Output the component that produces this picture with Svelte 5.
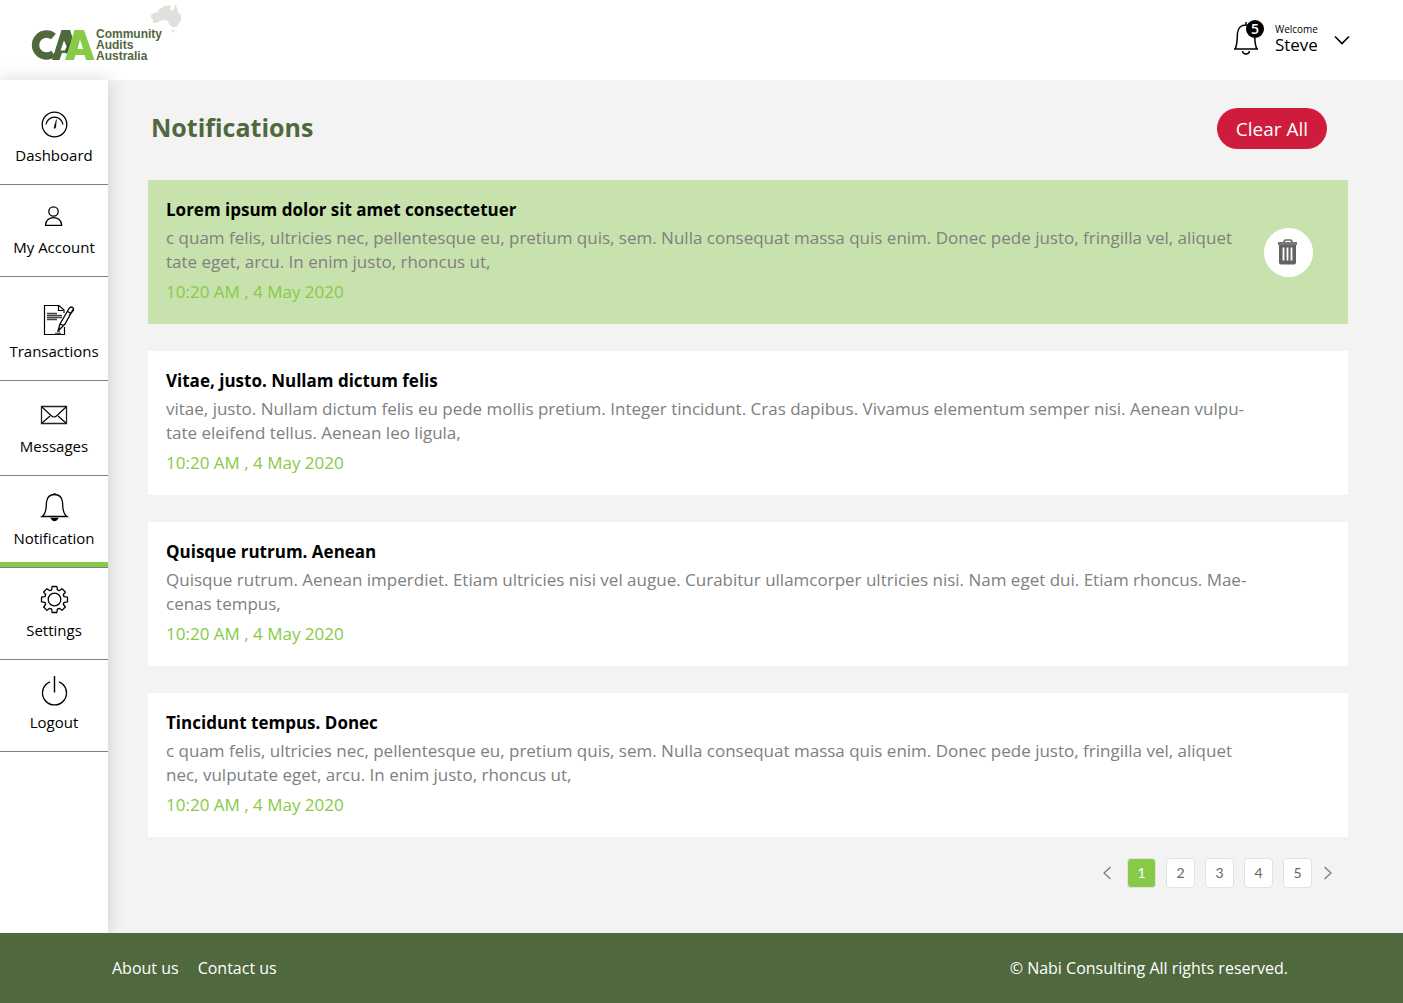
<script>
  const navItems = [
    { id: 'dashboard', label: 'Dashboard' },
    { id: 'account', label: 'My Account' },
    { id: 'transactions', label: 'Transactions' },
    { id: 'messages', label: 'Messages' },
    { id: 'notification', label: 'Notification' },
    { id: 'settings', label: 'Settings' },
    { id: 'logout', label: 'Logout' }
  ];

  const notifications = [
    {
      title: 'Lorem ipsum dolor sit amet consectetuer',
      body: 'c quam felis, ultricies nec, pellentesque eu, pretium quis, sem. Nulla consequat massa quis enim. Donec pede justo, fringilla vel, aliquet\ntate eget, arcu. In enim justo, rhoncus ut,',
      time: '10:20 AM , 4 May 2020',
      selected: true
    },
    {
      title: 'Vitae, justo. Nullam dictum felis',
      body: 'vitae, justo. Nullam dictum felis eu pede mollis pretium. Integer tincidunt. Cras dapibus. Vivamus elementum semper nisi. Aenean vulpu-\ntate eleifend tellus. Aenean leo ligula,',
      time: '10:20 AM , 4 May 2020',
      selected: false
    },
    {
      title: 'Quisque rutrum. Aenean',
      body: 'Quisque rutrum. Aenean imperdiet. Etiam ultricies nisi vel augue. Curabitur ullamcorper ultricies nisi. Nam eget dui. Etiam rhoncus. Mae-\ncenas tempus,',
      time: '10:20 AM , 4 May 2020',
      selected: false
    },
    {
      title: 'Tincidunt tempus. Donec',
      body: 'c quam felis, ultricies nec, pellentesque eu, pretium quis, sem. Nulla consequat massa quis enim. Donec pede justo, fringilla vel, aliquet\nnec, vulputate eget, arcu. In enim justo, rhoncus ut,',
      time: '10:20 AM , 4 May 2020',
      selected: false
    }
  ];

  const pages = [1, 2, 3, 4, 5];
  let current = $state(1);

  // Outline of the settings cog: eight teeth round a 16,16 centre.
  const cog = (() => {
    const pts = [];
    for (let i = 0; i < 8; i++) {
      const a = (i * Math.PI) / 4;
      for (const [da, r] of [[-0.29, 10], [-0.18, 13.2], [0.18, 13.2], [0.29, 10]]) {
        pts.push(`${(16.5 + r * Math.sin(a + da)).toFixed(2)} ${(16.5 - r * Math.cos(a + da)).toFixed(2)}`);
      }
    }
    return 'M' + pts.join('L') + 'Z';
  })();
</script>

<div class="page">
  <header class="topbar">
    <a class="logo" href="#home" aria-label="Community Audits Australia">
      <svg class="mark" width="64" height="32" viewBox="0 0 64 32" aria-hidden="true">
        <path d="M21.500 7.500A11 11 0 1 0 21.500 24.500" fill="none" stroke="#50683d" stroke-width="7.400" />
        <path d="M20 31L29.500 1H38L44 19L38 31L34.500 24H30L27.500 31Z" fill="#50683d" />
        <path d="M32 11.500L28.500 21.500H33.500L35 18.500Z" fill="#fff" />
        <path d="M38 12L42 19L36 27L33 21Z" fill="#3f5430" />
        <path fill-rule="evenodd" d="M33 31L42.500 1H52L62.500 31H54L52.500 26H43.500L42 31ZM45.500 20H51L48 10.500Z" fill="#86ca47" />
      </svg>
      <span class="wordmark">Community<br />Audits<br />Australia</span>
      <svg class="map" width="32" height="30" viewBox="0 0 32 30" aria-hidden="true">
        <path fill="#dfe1dc" d="M1 11L4 9L8 8L9 5L12 4L14 2L17 2L18 1L21 2L20 5L23 7L24 5L25 0L27 4L28 8L31 11L31 16L28 21L26 23L22 23L19 20L18 17L14 16L10 17L7 19L3 19L3 16L1 13ZM21 26L25 26L23 29Z" />
      </svg>
    </a>
    <div class="user">
      <button class="bell" aria-label="Notifications, 5 unread">
        <svg width="26" height="34" viewBox="0 0 26 34" fill="none" stroke="#000" stroke-width="1.500" aria-hidden="true">
          <path d="M13 1V4M1 28H25M2 28C4.500 24 4 18 4.500 12C5 7 8.500 4 13 4S21 7 21.500 12C22 18 21.500 24 24 28M9.500 30C10 34 16 34 16.500 30" />
        </svg>
        <span class="badge">5</span>
      </button>
      <button class="who" aria-label="Account menu">
        <span class="names"><small>Welcome</small><span>Steve</span></span>
        <svg width="16" height="10" viewBox="0 0 16 10" fill="none" stroke="#000" stroke-width="1.600" aria-hidden="true">
          <path d="M1 1.500L8 8.500L15 1.500" />
        </svg>
      </button>
    </div>
  </header>

  <div class="middle">
    <nav class="sidebar" aria-label="Main">
      {#each navItems as item (item.id)}
        <a class="item {item.id}" class:active={item.id === 'notification'} href="#{item.id}">
          <svg width="32" height="32" viewBox="0 0 32 32" fill="none" stroke="#000" stroke-width="1.300" aria-hidden="true">
            {#if item.id === 'dashboard'}
              <circle cx="16.500" cy="16.500" r="12.300" />
              <path d="M8 16.500A8.600 8.600 0 0 1 25 16.500" />
              <path d="M18.500 11.500L17.800 19Q17 21.500 16 20Q16 18.500 18.500 11.500Z" fill="#000" stroke-width=".4" />
            {:else if item.id === 'account'}
              <circle cx="15.500" cy="11.500" r="4.700" />
              <path d="M7.500 25.400C7.500 15 23.700 15 23.700 25.400Z" />
            {:else if item.id === 'transactions'}
              <path d="M26.500 23V30.500H6.500V1.500H21L26 6V9M20.500 1.500V6.500H25" stroke-width="1.200" />
              <path d="M9 9.500H19M9 11.500H24M9 13.500H24M9 15.500H19" stroke="#444" />
              <path d="M20 27L22 20L31 4.500Q33.500 1.500 35.500 4.500L27 20L20.500 26.500M29 7L33 9.500M31.500 11L36 5.500M22 20L26 21.500" stroke-width="1.300" />
              <path d="M17 29.500H23M19 27.500H22" stroke="#555" />
            {:else if item.id === 'messages'}
              <path d="M3.500 7.500H28.500V24.500H3.500Z" stroke="#222" />
              <path d="M4 8L13 16.500Q16 19.500 19 16.500L28 8M4 24L12 17M28 24L20 17" stroke-width="1.100" />
            {:else if item.id === 'notification'}
              <path d="M4 25.500H29C24 22 25 16 24.500 11C23.800 5.500 20.500 3.500 16.500 3.500S9.200 5.500 8.500 11C8 16 9 22 4 25.500Z" />
              <path d="M13.500 27.500H19.500Q16.500 31.500 13.500 27.500ZM15.500 3H17.500" fill="#000" />
            {:else if item.id === 'settings'}
              <path d={cog} stroke-linejoin="round" />
              <circle cx="16.500" cy="16.500" r="6.300" />
            {:else}
              <path d="M12 6.800A12 12 0 1 0 21 6.800M16.500 1V17.500" stroke-width="1.400" />
            {/if}
          </svg>
          <span>{item.label}</span>
        </a>
      {/each}
    </nav>

    <main>
      <div class="heading">
        <h1>Notifications</h1>
        <button class="clear">Clear All</button>
      </div>

      <div class="list">
        {#each notifications as n (n.title)}
          <article class="card" class:selected={n.selected}>
            <div class="text">
              <h2>{n.title}</h2>
              <p>{n.body}</p>
              <time datetime="2020-05-04T10:20">{n.time}</time>
            </div>
            {#if n.selected}
              <button class="trash" aria-label="Delete notification">
                <svg width="21" height="26" viewBox="0 0 21 26" aria-hidden="true">
                  <path d="M6 3Q6 1 8 1H12Q14 1 14 3" fill="none" stroke="#666" stroke-width="1.500" />
                  <path d="M0 3H19V6H0Z" fill="#777" />
                  <path d="M1 6H18V23.500Q18 25.500 16 25.500H3Q1 25.500 1 23.500Z" fill="#636363" />
                  <path d="M5.500 8.500V21.500M9.500 8.500V21.500M13.500 8.500V21.500" stroke="#fff" stroke-width="1.800" />
                </svg>
              </button>
            {/if}
          </article>
        {/each}
      </div>

      <nav class="pager" aria-label="Pages">
        <button class="arrow prev" aria-label="Previous page" onclick={() => (current = Math.max(1, current - 1))}>
          <svg width="8" height="14" viewBox="0 0 8 14" fill="none" stroke="#777" stroke-width="1.200" aria-hidden="true"><path d="M7.500 1L1 7L7.500 13" /></svg>
        </button>
        {#each pages as p (p)}
          <button class="num" class:on={p === current} onclick={() => (current = p)}>{p}</button>
        {/each}
        <button class="arrow" aria-label="Next page" onclick={() => (current = Math.min(5, current + 1))}>
          <svg width="8" height="14" viewBox="0 0 8 14" fill="none" stroke="#777" stroke-width="1.200" aria-hidden="true"><path d="M.5 1L7 7L.5 13" /></svg>
        </button>
      </nav>
    </main>
  </div>

  <footer>
    <div class="links">
      <a href="#about">About us</a>
      <a href="#contact">Contact us</a>
    </div>
    <span>© Nabi Consulting All rights reserved.</span>
  </footer>
</div>

<style>
  :global(body) {
    margin: 0;
  }
  .page {
    display: flex;
    flex-direction: column;
    min-height: 100vh;
    font-family: 'Open Sans', 'Noto Sans', sans-serif;
    font-size: 17px;
    line-height: 24px;
    color: #000;
    background: #f3f3f3;
  }
  .page :global(*) {
    box-sizing: border-box;
  }
  a {
    color: inherit;
    text-decoration: none;
  }
  button {
    font: inherit;
    color: inherit;
    background: none;
    border: 0;
    padding: 0;
    cursor: pointer;
  }
  svg {
    display: block;
    flex: none;
    overflow: visible;
  }

  .topbar {
    display: flex;
    justify-content: space-between;
    align-items: center;
    height: 80px;
    padding: 0 53px 0 32px;
    background: #fff;
  }
  .logo {
    position: relative;
    display: flex;
    align-items: center;
    padding-top: 10px;
  }
  .wordmark {
    font: bold 12px/11px 'Liberation Sans', sans-serif;
    color: #50683d;
  }
  .map {
    position: absolute;
    top: -15px;
    left: 118px;
  }
  .user {
    display: flex;
    align-items: center;
    gap: 16px;
  }
  .bell {
    position: relative;
    padding-bottom: 4px;
  }
  .badge {
    position: absolute;
    top: -1px;
    left: 13px;
    width: 18px;
    height: 18px;
    border-radius: 50%;
    background: #000;
    color: #fff;
    font-size: 14px;
    font-weight: 600;
    line-height: 18px;
  }
  .who {
    display: flex;
    align-items: center;
    gap: 16px;
    text-align: left;
    line-height: 18px;
  }
  .names {
    display: flex;
    flex-direction: column;
    padding-bottom: 4px;
  }
  .names small {
    font-size: 10px;
    line-height: 14px;
  }

  .middle {
    display: flex;
    flex: 1;
  }
  .sidebar {
    flex: none;
    width: 108px;
    padding-top: 13px;
    background: #fff;
    box-shadow: 0 0 18px rgba(0, 0, 0, 0.16);
  }
  .item {
    display: flex;
    flex-direction: column;
    align-items: center;
    gap: 5px;
    padding: 15px 0 19px;
    border-bottom: 1px solid #808080;
    font-size: 15px;
    line-height: 20px;
  }
  .transactions {
    padding-top: 27px;
  }
  .messages {
    padding-top: 18px;
  }
  .active {
    box-shadow: inset 0 -5px #86ca47;
  }

  main {
    flex: 1;
    min-width: 0;
    padding: 28px 55px 45px 40px;
  }
  .heading {
    display: flex;
    justify-content: space-between;
    align-items: flex-start;
    padding: 0 21px 0 3px;
    margin-bottom: 31px;
  }
  h1 {
    margin: 0;
    font-size: 25px;
    line-height: 38px;
    color: #50683d;
  }
  .clear {
    min-width: 110px;
    height: 41px;
    border-radius: 21px;
    background: #d01c3c;
    color: #fff;
    font-size: 19px;
  }
  .list {
    display: flex;
    flex-direction: column;
    gap: 27px;
  }
  .card {
    display: flex;
    justify-content: space-between;
    align-items: center;
    gap: 24px;
    padding: 0 35px 0 18px;
    background: #fff;
  }
  .selected {
    background: #c8e2ad;
  }
  .text {
    padding: 17px 0 20px;
  }
  h2 {
    margin: 0 0 3px;
    font-size: 17px;
    line-height: 26px;
  }
  p {
    margin: 0 0 6px;
    white-space: pre-line;
    color: #808080;
  }
  time {
    display: block;
    color: #86ca47;
  }
  .trash {
    display: grid;
    place-items: center;
    flex: none;
    width: 49px;
    height: 49px;
    border-radius: 50%;
    background: #fff;
  }
  .pager {
    display: flex;
    justify-content: flex-end;
    align-items: center;
    gap: 10px;
    margin-top: 21px;
    padding-right: 14px;
  }
  .num {
    width: 29px;
    height: 30px;
    border: 1px solid #e2e2e2;
    border-radius: 4px;
    background: #fff;
    color: #666;
    font: 14px/20px Lato, sans-serif;
  }
  .on {
    background: #86ca47;
    color: #fff;
  }
  .arrow {
    padding: 0 2px;
  }
  .prev {
    padding-right: 6px;
  }

  footer {
    display: flex;
    justify-content: space-between;
    align-items: center;
    min-height: 70px;
    padding: 0 115px 0 112px;
    background: #50683d;
    color: #fff;
    font-size: 16px;
  }
  .links {
    display: flex;
    gap: 19px;
  }
</style>
